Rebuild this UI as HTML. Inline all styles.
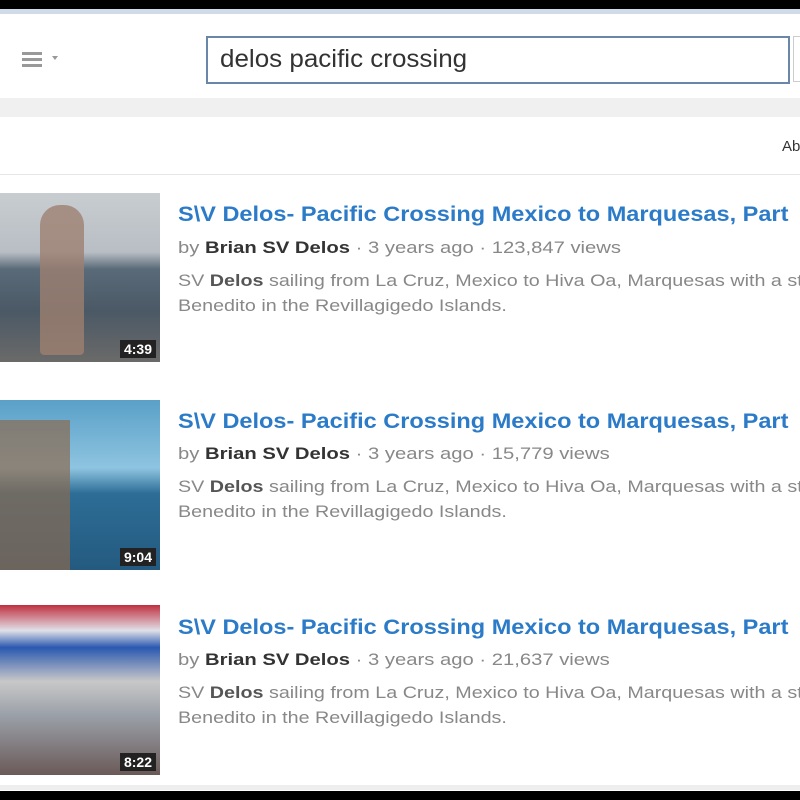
<!DOCTYPE html>
<html><head><meta charset="utf-8"><style>
body{margin:0;width:800px;height:800px;overflow:hidden;background:#fff;font-family:"Liberation Sans",Arial,sans-serif;position:relative}
.a{position:absolute}
.t{position:absolute;left:178px;font-size:21px;font-weight:bold;color:#2b7bc8;white-space:nowrap;transform:scaleX(1.12);transform-origin:left}
.by{position:absolute;left:178px;font-size:17px;color:#888;white-space:nowrap;transform:scaleX(1.19);transform-origin:left}
.by b{color:#333}
.d{position:absolute;left:178px;font-size:17px;color:#888;line-height:25px;white-space:nowrap;transform:scaleX(1.16);transform-origin:left}
.d b{color:#555;font-weight:bold}
.th{position:absolute;left:0;width:160px}
.dur{position:absolute;right:4px;bottom:4px;background:#222;color:#fff;font-size:14px;font-weight:bold;padding:1px 4px}
</style></head><body>
<div class="a" style="left:0;top:0;width:800px;height:9px;background:#000"></div>
<div class="a" style="left:0;top:9px;width:800px;height:5px;background:#cfdbe8"></div>
<div class="a" style="left:0;top:98px;width:800px;height:19px;background:#f0f0f0"></div>
<div class="a" style="left:0;top:174px;width:800px;height:1px;background:#e6e6e6"></div>
<div class="a" style="left:22px;top:52px;width:20px;height:3px;background:#999;box-shadow:0 6px 0 #999,0 12px 0 #999"></div>
<div class="a" style="left:52px;top:56px;border-left:3px solid transparent;border-right:3px solid transparent;border-top:4px solid #999"></div>
<div class="a" style="left:206px;top:36px;width:580px;height:44px;border:2px solid #6a86a8;background:#fff"></div>
<div class="a" style="left:220px;top:45px;font-size:25px;color:#333;transform:scaleX(1.04);transform-origin:left">delos pacific crossing</div>
<div class="a" style="left:793px;top:36px;width:7px;height:44px;border:1px solid #ccc;border-right:none"></div>
<div class="a" style="left:782px;top:138px;font-size:15px;color:#333">Ab</div>

<div class="th" style="top:193px;height:169px;background:linear-gradient(#c8cdd0 0,#b8bec4 35%,#5a6a78 45%,#4b5966 70%,#6a6a68 100%)"><div class="a" style="left:40px;top:12px;width:44px;height:150px;background:#9d8070;border-radius:20px 20px 4px 4px;opacity:.8"></div><div class="dur">4:39</div></div>
<div class="t" style="top:203px">S\V Delos- Pacific Crossing Mexico to Marquesas, Part</div>
<div class="by" style="top:238px">by <b>Brian SV Delos</b> · 3 years ago · 123,847 views</div>
<div class="d" style="top:268px">SV <b>Delos</b> sailing from La Cruz, Mexico to Hiva Oa, Marquesas with a st<br>Benedito in the Revillagigedo Islands.</div>

<div class="th" style="top:400px;height:170px;background:linear-gradient(#5aa0c8 0,#8ec4e0 40%,#2d6d96 55%,#245a80 100%)"><div class="a" style="left:0;top:20px;width:70px;height:150px;background:#8a6a50;opacity:.7"></div><div class="dur">9:04</div></div>
<div class="t" style="top:410px">S\V Delos- Pacific Crossing Mexico to Marquesas, Part</div>
<div class="by" style="top:444px">by <b>Brian SV Delos</b> · 3 years ago · 15,779 views</div>
<div class="d" style="top:474px">SV <b>Delos</b> sailing from La Cruz, Mexico to Hiva Oa, Marquesas with a st<br>Benedito in the Revillagigedo Islands.</div>

<div class="th" style="top:605px;height:170px;background:linear-gradient(#c03040 0,#e0e0e8 15%,#2a58b0 25%,#c8c8c8 45%,#9aa0a8 65%,#6a5a58 100%)"><div class="dur">8:22</div></div>
<div class="t" style="top:616px">S\V Delos- Pacific Crossing Mexico to Marquesas, Part</div>
<div class="by" style="top:650px">by <b>Brian SV Delos</b> · 3 years ago · 21,637 views</div>
<div class="d" style="top:680px">SV <b>Delos</b> sailing from La Cruz, Mexico to Hiva Oa, Marquesas with a st<br>Benedito in the Revillagigedo Islands.</div>

<div class="a" style="left:0;top:785px;width:800px;height:5px;background:#eee"></div>
<div class="a" style="left:0;top:791px;width:800px;height:9px;background:#000"></div>
</body></html>
